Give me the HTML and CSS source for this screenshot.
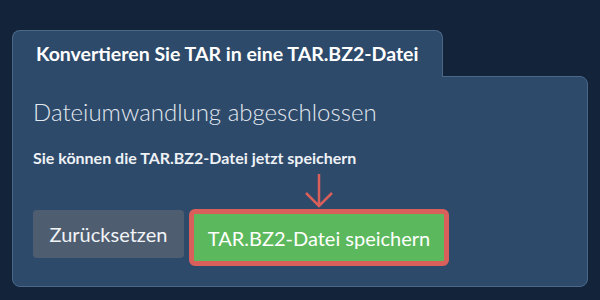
FILE: index.html
```html
<!DOCTYPE html>
<html lang="de">

<head>
    <meta charset="UTF-8">
    <meta name="viewport" content="width=device-width, initial-scale=1.0">
    <title>TAR in TAR.BZ2 konvertieren</title>
    <link rel="stylesheet" href="styles.css">
</head>

<body>
    <div class="wrapper">
        <div class="tab">
            <h2>Konvertieren Sie TAR in eine TAR.BZ2-Datei</h2>
        </div>
        <div class="panel">
            <h1>Dateiumwandlung abgeschlossen</h1>
            <p class="hint">Sie können die TAR.BZ2-Datei jetzt speichern</p>
            <div class="arrow-row">
                <svg class="arrow" width="30" height="36" viewBox="0 0 30 36">
                    <path d="M15 1 V33 M2 20 L15 33 L28 20" fill="none" stroke="#d9605a" stroke-width="2.5" />
                </svg>
            </div>
            <div class="actions">
                <button type="button" class="btn-reset">Zurücksetzen</button>
                <button type="button" class="btn-save">TAR.BZ2-Datei speichern</button>
            </div>
        </div>
    </div>
</body>

</html>
```

FILE: styles.css
```css
/* Reset */
* {
    margin: 0;
    padding: 0;
    box-sizing: border-box;
    font-family: 'Lato', sans-serif;
}

body {
    background-color: #12233a;
    width: 600px;
    height: 300px;
    overflow: hidden;
}

.wrapper {
    padding: 30px 12px 0 12px;
}

/* Aba do título */
.tab {
    position: relative;
    z-index: 1;
    width: 431px;
    height: 47px;
    margin-bottom: -1px;
    background-color: #2d4a6a;
    border: 1px solid #4c6887;
    border-bottom: none;
    border-radius: 8px 8px 0 0;
    padding: 11px 0 0 23px;
}

.tab h2 {
    color: #fff;
    font-size: 19.5px;
    font-weight: bold;
    line-height: 24px;
}

/* Painel */
.panel {
    height: 211px;
    background-color: #2d4a6a;
    border: 1px solid #4c6887;
    border-radius: 0 8px 8px 8px;
    padding: 20px 20px 0 20px;
}

.panel h1 {
    color: #e3e8ef;
    font-size: 24px;
    font-weight: 300;
    line-height: 29px;
    margin-bottom: 22px;
}

.hint {
    color: #eef1f5;
    font-size: 16px;
    font-weight: bold;
    line-height: 19px;
}

.arrow-row {
    padding-left: 271px;
    height: 42px;
    padding-top: 6px;
}

.arrow {
    display: block;
}

.actions {
    display: flex;
    align-items: flex-start;
    gap: 5px;
}

.btn-reset {
    width: 151px;
    height: 48px;
    background-color: #4e5e70;
    color: #f2f4f7;
    border: none;
    border-radius: 4px;
    font-size: 20px;
    font-weight: normal;
    margin-top: 1px;
}

.btn-save {
    width: 260px;
    height: 57px;
    background-color: #5cb85c;
    color: #fff;
    border: 5px solid #d9605a;
    border-radius: 6px;
    font-size: 20px;
    font-weight: normal;
}
```
